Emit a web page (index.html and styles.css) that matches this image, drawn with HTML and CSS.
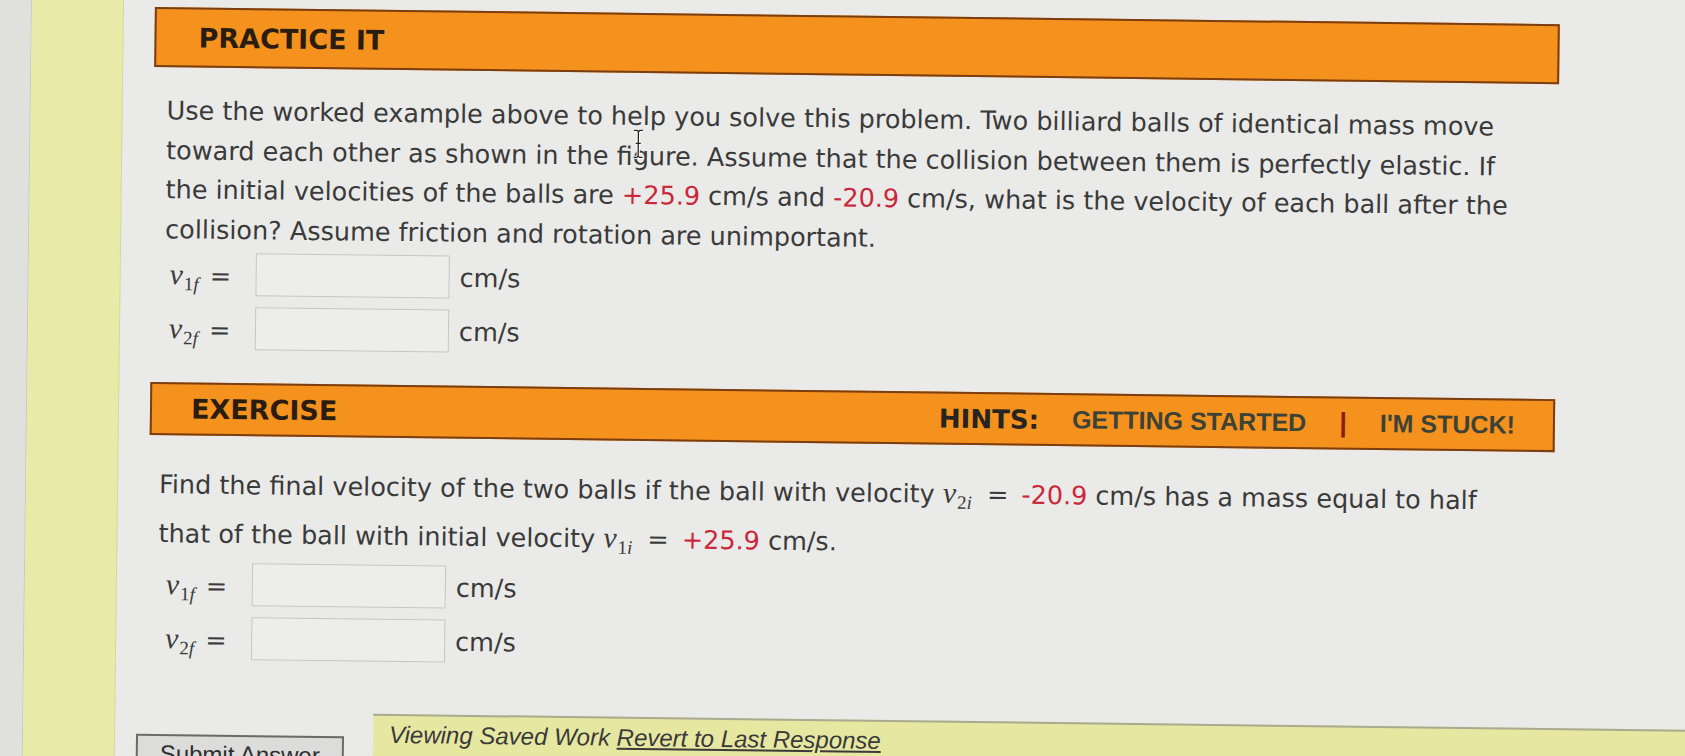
FILE: index.html
```html
<!DOCTYPE html>
<html lang="en">
<head>
<meta charset="utf-8">
<title>Practice It</title>
<link rel="stylesheet" href="styles.css">
</head>
<body>
<div class="page">
  <div class="gutter"></div>
  <div class="rail"></div>
  <main class="content">
    <header class="bar bar-practice">
      <h2 class="bar-title">PRACTICE IT</h2>
    </header>
    <p class="prose prose-1">Use the worked example above to help you solve this problem. Two billiard balls of identical mass move toward each other as shown in the <span class="cursor-anchor">fi<span class="ibeam"><svg width="12" height="30" viewBox="0 0 12 30"><path d="M1.5 1.5h3.2l1.3 1.3 1.3-1.3h3.2M6 2.8v24.4M1.5 28.5h3.2l1.3-1.3 1.3 1.3h3.2M3.5 14.5h5" fill="none" stroke="#fff" stroke-width="3.2"/><path d="M1.5 1.5h3.2l1.3 1.3 1.3-1.3h3.2M6 2.8v24.4M1.5 28.5h3.2l1.3-1.3 1.3 1.3h3.2M3.5 14.5h5" fill="none" stroke="#222" stroke-width="1.3"/></svg></span></span>gure. Assume that the collision between them is perfectly elastic. If the initial velocities of the balls are <span class="num">+25.9</span> cm/s and <span class="num">-20.9</span> cm/s, what is the velocity of each ball after the collision? Assume friction and rotation are unimportant.</p>
    <div class="answers">
      <div class="answer-row">
        <span class="var"><span class="sym">v</span><sub>1<i>f</i></sub><span class="eq">=</span></span>
        <input class="field" type="text" aria-label="v1f">
        <span class="unit">cm/s</span>
      </div>
      <div class="answer-row">
        <span class="var"><span class="sym">v</span><sub>2<i>f</i></sub><span class="eq">=</span></span>
        <input class="field" type="text" aria-label="v2f">
        <span class="unit">cm/s</span>
      </div>
    </div>

    <header class="bar bar-exercise">
      <h2 class="bar-title">EXERCISE</h2>
      <nav class="hints">
        <span class="hints-label">HINTS:</span>
        <a class="hint-link" href="#">GETTING STARTED</a>
        <span class="hint-sep">|</span>
        <a class="hint-link" href="#">I'M STUCK!</a>
      </nav>
    </header>
    <p class="prose prose-2">Find the final velocity of the two balls if the ball with velocity <span class="math"><span class="sym">v</span><sub>2<i>i</i></sub></span><span class="eq-inline">=</span><span class="num">-20.9</span> cm/s has a mass equal to half that of the ball with initial velocity <span class="math"><span class="sym">v</span><sub>1<i>i</i></sub></span><span class="eq-inline">=</span><span class="num">+25.9</span> cm/s.</p>
    <div class="answers answers-2">
      <div class="answer-row">
        <span class="var"><span class="sym">v</span><sub>1<i>f</i></sub><span class="eq">=</span></span>
        <input class="field" type="text" aria-label="v1f">
        <span class="unit">cm/s</span>
      </div>
      <div class="answer-row">
        <span class="var"><span class="sym">v</span><sub>2<i>f</i></sub><span class="eq">=</span></span>
        <input class="field" type="text" aria-label="v2f">
        <span class="unit">cm/s</span>
      </div>
    </div>

    <div class="footer">
      <button class="submit" type="button">Submit Answer</button>
      <div class="saved">Viewing Saved Work <a href="#">Revert to Last Response</a></div>
    </div>
  </main>
</div>
</body>
</html>
```

FILE: styles.css
```css
* { box-sizing: border-box; }

html, body {
  margin: 0;
  padding: 0;
}

html {
  background: #eaeae8;
}

body {
  width: 1685px;
  height: 756px;
  overflow: hidden;
  font-family: "DejaVu Sans", Verdana, sans-serif;
  color: #3a3a3a;
}

.page {
  display: flex;
  width: 1760px;
  min-height: 830px;
  background: #eaeae8;
  transform: rotate(0.7deg);
  transform-origin: 155px 0;
}

.gutter {
  flex: none;
  width: 32px;
  background: #e0e0dd;
  border-right: 1px solid #c9c9c2;
}

.rail {
  flex: none;
  width: 92px;
  background: #e8eaa8;
  border-right: 1px solid #d6d8a4;
}

.content {
  flex: none;
  width: 1405px;
  margin-left: 31px;
  padding-top: 7px;
}

/* orange section bars */
.bar {
  display: flex;
  align-items: center;
  background: #f5921e;
  border: 2px solid #7a3e12;
}

.bar-practice {
  height: 60px;
  padding-left: 42px;
}

.bar-exercise {
  height: 53px;
  margin-top: 33px;
  padding-left: 39px;
  padding-right: 38px;
}

.bar-title {
  margin: 0;
  font: bold 27px/1 "DejaVu Sans", Verdana, sans-serif;
  color: #2a1d10;
}

.hints {
  margin-left: auto;
  display: flex;
  align-items: center;
  gap: 33px;
}

.hints-label {
  font: bold 26px/1 "DejaVu Sans", Verdana, sans-serif;
  color: #262420;
}

.hint-link {
  font: bold 25px/1 "Liberation Sans", Arial, sans-serif;
  color: #3d4236;
  text-decoration: none;
}

.hint-sep {
  font: bold 27px/1 "Liberation Sans", Arial, sans-serif;
  color: #86200c;
}

/* text */
.prose {
  margin: 24px 0 0;
  width: 1377px;
  padding-left: 13px;
  font-size: 25.5px;
  line-height: 39.5px;
}

.prose-2 {
  margin-top: 24px;
  padding-left: 10px;
  width: 1384px;
  line-height: 48px;
}

.num {
  color: #c9283a;
}

.cursor-anchor {
  position: relative;
}

.ibeam {
  position: absolute;
  left: 15px;
  top: -12px;
  line-height: 0;
}

.math {
  white-space: nowrap;
}

.sym {
  font-family: "Liberation Serif", "Times New Roman", serif;
  font-style: italic;
  font-size: 30px;
}

sub {
  font-family: "Liberation Serif", "Times New Roman", serif;
  font-size: 19px;
  vertical-align: -6px;
  line-height: 0;
  margin-left: 1px;
}

.eq-inline {
  margin: 0 13px 0 15px;
}

/* answer rows */
.answers {
  display: flex;
  flex-direction: column;
  gap: 11px;
  margin-top: 3px;
}

.answers-2 {
  margin-top: 5px;
}

.answer-row {
  display: grid;
  grid-template-columns: 94px 194px auto;
  column-gap: 10px;
  align-items: center;
  height: 43px;
  font-size: 25.5px;
}

.var {
  padding-left: 18px;
  white-space: nowrap;
}

.eq {
  margin-left: 11px;
}

.field {
  width: 194px;
  height: 43px;
  margin: 0;
  border: 1px solid #c6c6c2;
  background: #ededeb;
  font: 24px "DejaVu Sans", sans-serif;
}

.unit {
  color: #3a3a3a;
}

/* footer */
.footer {
  display: flex;
  align-items: flex-start;
  margin-top: 52px;
  margin-right: -220px;
}

.submit {
  flex: none;
  width: 208px;
  margin-top: 23px;
  margin-left: -10px;
  padding: 4px 0 14px;
  border: 2px solid #6a6a6a;
  background: #dcdcda;
  color: #2e2e2e;
  font: 24px/28px "Liberation Sans", Arial, sans-serif;
  text-align: center;
}

.saved {
  flex: 1;
  min-height: 90px;
  margin-left: 29px;
  padding: 5px 16px;
  background: #e6e8a2;
  border-top: 2px solid #a9aa90;
  font: italic 24px/28px "Liberation Sans", Arial, sans-serif;
  color: #3a3a3a;
}

.saved a {
  color: inherit;
  text-decoration: underline;
}
```
